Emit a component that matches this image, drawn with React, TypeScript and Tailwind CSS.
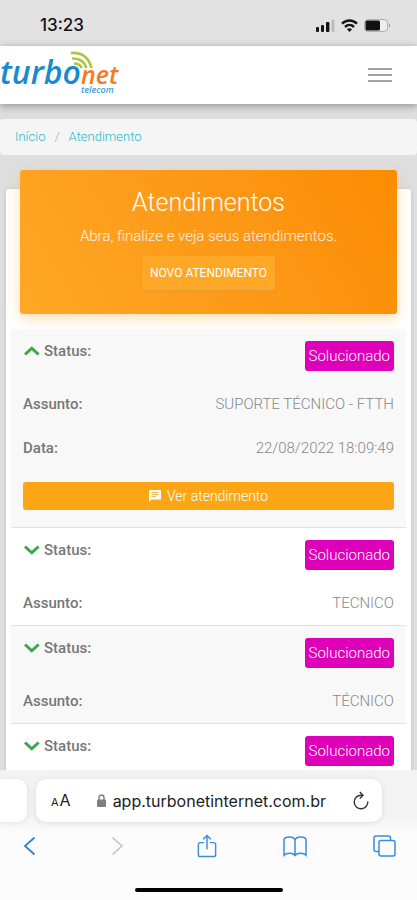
import { useState } from "react";

type Ticket = {
  id: number;
  status: string;
  subject: string;
  date: string;
};

const initialTickets: Ticket[] = [
  { id: 1, status: "Solucionado", subject: "SUPORTE TÉCNICO - FTTH", date: "22/08/2022 18:09:49" },
  { id: 2, status: "Solucionado", subject: "TECNICO", date: "10/06/2022 09:12:30" },
  { id: 3, status: "Solucionado", subject: "TÉCNICO", date: "02/05/2022 14:40:11" },
  { id: 4, status: "Solucionado", subject: "TÉCNICO", date: "18/03/2022 11:25:03" },
];

function StatusBar() {
  return (
    <div className="flex h-[46px] shrink-0 items-center justify-between bg-[#e2e2e2] pl-10 pr-[26px] font-['Inter',sans-serif]">
      <span className="pt-1 text-[17px] leading-5 font-medium text-[#111]">13:23</span>
      <div className="flex items-center gap-[6px] pt-1">
        <svg width="19" height="13" viewBox="0 0 19 13">
          <rect x="0" y="8" width="3" height="5" rx="1" fill="#151515" />
          <rect x="5" y="6" width="3" height="7" rx="1" fill="#151515" />
          <rect x="10" y="3" width="3.4" height="10" rx="1" fill="#151515" />
          <rect x="15.5" y="0.5" width="3" height="12.5" rx="1" fill="#bdbdbd" />
        </svg>
        <svg width="17" height="13" viewBox="0 0 17 13" fill="none" stroke="#151515" strokeWidth="2.5">
          <path d="M1 4.6C5.2 0.3 11.8 0.3 16 4.6" />
          <path d="M4 8C6.6 5.400 10.4 5.400 13 8" />
          <path d="M8.500 13L5.900 10.300C7.400 9 9.600 9 11.100 10.300Z" fill="#151515" stroke="none" />
        </svg>
        <svg width="27" height="13" viewBox="0 0 27 13">
          <rect x="0.600" y="0.600" width="23" height="11.800" rx="3.200" fill="#ededed" stroke="#aaa" />
          <rect x="1.500" y="1.500" width="14.500" height="10" rx="1.500" fill="#111" />
          <path d="M25 4.300C26.600 5 26.600 8 25 8.700Z" fill="#999" />
        </svg>
      </div>
    </div>
  );
}

function Logo() {
  return (
    <svg width="124" height="50" viewBox="0 0 124 50" role="img" aria-label="turbonet telecom">
      <g fontFamily="'Open Sans', sans-serif" fontStyle="italic">
        <text x="0" y="34" fontSize="32" fontWeight="600" fill="#1a8ad0">turbo</text>
        <text x="81" y="34" fontSize="25" fontWeight="600" fill="#f47b20">net</text>
        <text x="81" y="43" fontSize="9" fontWeight="600" fill="#3d9bd0">telecom</text>
      </g>
      <g fill="none" stroke="#a9c83a" strokeWidth="2.600">
        <path d="M71 3C82 2 89 8 91.500 18" />
        <path d="M72 8.500C80 8 84.500 12 86.500 18" />
        <path d="M74 13.500C78.500 13.500 80.500 15 81.500 18" />
      </g>
    </svg>
  );
}

function Header() {
  return (
    <header className="relative z-10 flex h-[58px] shrink-0 items-center justify-between bg-white pr-[25px] shadow-[0_2px_8px_rgba(0,0,0,0.35)]">
      <a href="#inicio">
        <Logo />
      </a>
      <button type="button" aria-label="Menu" className="flex w-6 flex-col gap-1">
        <span className="h-[2px] bg-[#a3a3a3]" />
        <span className="h-[2px] bg-[#a3a3a3]" />
        <span className="h-[2px] bg-[#a3a3a3]" />
      </button>
    </header>
  );
}

function Breadcrumb() {
  return (
    <nav className="mt-[15px] flex h-9 shrink-0 items-center gap-[9px] rounded bg-[#f5f5f5] px-[15px] text-[13px] leading-5 font-light">
      <a href="#inicio" className="text-[#26b8c4]">Início</a>
      <span className="text-[#aaa]">/</span>
      <a href="#atendimento" className="text-[#26b8c4]">Atendimento</a>
    </nav>
  );
}

function Banner() {
  return (
    <div className="mx-[14px] -mt-[19px] flex flex-col items-center rounded-[3px] bg-linear-60 from-[#ffa726] to-[#fb8c00] pt-[17px] pb-6 text-white shadow-[0_5px_14px_rgba(255,152,0,0.3)]">
      <h1 className="text-[25px] leading-8 font-light">Atendimentos</h1>
      <p className="mt-[7px] text-[15px] leading-5 font-light text-white/85">Abra, finalize e veja seus atendimentos.</p>
      <button type="button" className="mt-[10px] h-[34px] rounded-[3px] bg-[#ffa726] px-2 text-[12px] leading-5 shadow-[0_1px_2px_rgba(153,153,153,0.3)]">
        NOVO ATENDIMENTO
      </button>
    </div>
  );
}

function TicketRow({ ticket, open, onToggle }: { ticket: Ticket; open: boolean; onToggle: () => void }) {
  return (
    <li className="border-b border-[#e2e2e2] px-3 py-3 odd:bg-[#f8f8f8] even:bg-white">
      <div className="flex h-[30px] items-start justify-between">
        <button type="button" onClick={onToggle} aria-expanded={open} className="flex items-center gap-1 text-[15px] leading-5 font-medium text-[#777]">
          <svg width="17" height="10" viewBox="0 0 17 10" fill="none" stroke="#3fa648" strokeWidth="3">
            {open ? <path d="M2 8.500L8.800 2.200L15.600 8.500" /> : <path d="M2 1.500L8.800 7.800L15.600 1.500" />}
          </svg>
          Status:
        </button>
        <span className="flex h-[30px] items-center rounded-[3px] bg-[#dd00b8] px-1 text-[15px] leading-5 font-light text-white">
          {ticket.status}
        </span>
      </div>
      <dl className="mt-[23px] flex flex-col gap-6 text-[15px] leading-5">
        <div className="flex justify-between">
          <dt className="font-medium text-[#777]">Assunto:</dt>
          <dd className="font-light text-[#888]">{ticket.subject}</dd>
        </div>
        {open && (
          <div className="flex justify-between">
            <dt className="font-medium text-[#777]">Data:</dt>
            <dd className="font-light text-[#888]">{ticket.date}</dd>
          </div>
        )}
      </dl>
      {open && (
        <button type="button" className="mt-6 mb-[5px] flex h-7 w-full items-center justify-center gap-[6px] rounded-[3px] bg-[#fca615] text-[14px] leading-5 font-light text-white">
          <svg width="12" height="12" viewBox="0 0 12 12">
            <path d="M1.200 0H10.800Q12 0 12 1.200V8.400Q12 9.600 10.800 9.600H2.400L0 12V1.200Q0 0 1.200 0Z" fill="#fff" />
            <path d="M2.500 2.700H9.500M2.500 4.700H9.500M2.500 6.700H7" stroke="#fca615" strokeWidth="0.900" />
          </svg>
          Ver atendimento
        </button>
      )}
    </li>
  );
}

function BrowserBar() {
  return (
    <footer className="relative z-10 shrink-0 overflow-hidden bg-[#fcfcfc]">
      <div className="flex gap-[9px] bg-linear-to-b from-[#f3f3f3] from-70% to-[#fcfcfc] pt-[9px] pr-[35px] pb-3">
        <div className="h-[43px] w-[27px] rounded-r-[10px] bg-white shadow-[0_1px_6px_rgba(0,0,0,0.08)]" />
        <div className="flex h-[43px] flex-1 items-center justify-between rounded-[10px] bg-white pr-3 pl-[15px] shadow-[0_1px_6px_rgba(0,0,0,0.1)]">
          <button type="button" aria-label="Tamanho do texto" className="flex items-baseline gap-[1px] font-['Inter',sans-serif] leading-5 text-[#222]">
            <span className="text-[11px]">A</span>
            <span className="text-[16px]">A</span>
          </button>
          <div className="flex items-center gap-[7px] font-['Inter',sans-serif]">
            <svg width="9" height="13" viewBox="0 0 9 13">
              <rect x="0" y="5.500" width="9" height="7.500" rx="1.200" fill="#7e7e7e" />
              <path d="M2 6V3.500C2 0.200 7 0.200 7 3.500V6" fill="none" stroke="#7e7e7e" strokeWidth="1.400" />
            </svg>
            <span className="text-[16px] leading-5 text-[#222]">app.turbonetinternet.com.br</span>
          </div>
          <button type="button" aria-label="Recarregar">
            <svg width="18" height="20" viewBox="0 0 18 20" fill="none" stroke="#333" strokeWidth="1.400">
              <path d="M15.800 10.500A6.800 6.800 0 1 1 9 4.200H10.500" />
              <path d="M7.800 1L11 4.200L7.800 7.400" />
            </svg>
          </button>
        </div>
      </div>
      <div className="flex h-[46px] items-center justify-between pr-[21px] pb-[22px] pl-[17px]">
        <button type="button" aria-label="Voltar" className="flex w-6 justify-center">
          <svg width="13" height="20" viewBox="0 0 13 20" fill="none" stroke="#2c82dc" strokeWidth="1.800">
            <path d="M11.500 1.500L2 10L11.500 18.500" />
          </svg>
        </button>
        <button type="button" aria-label="Avançar" className="flex w-6 justify-center">
          <svg width="13" height="20" viewBox="0 0 13 20" fill="none" stroke="#c2c2c2" strokeWidth="1.600">
            <path d="M1.500 1.500L11 10L1.500 18.500" />
          </svg>
        </button>
        <button type="button" aria-label="Compartilhar" className="flex w-6 justify-center">
          <svg width="20" height="24" viewBox="0 0 20 25" fill="none" stroke="#3b8be0" strokeWidth="1.500">
            <path d="M7 9H3Q1 9 1 11V21.500Q1 23.500 3 23.500H17Q19 23.500 19 21.500V11Q19 9 17 9H13" />
            <path d="M10 16V1.500M6 5.500L10 1.500L14 5.500" />
          </svg>
        </button>
        <button type="button" aria-label="Favoritos" className="flex w-6 justify-center">
          <svg width="24" height="21" viewBox="0 0 24 21" fill="none" stroke="#3b8be0" strokeWidth="1.500">
            <path d="M12 4C11 0 2.500 0 1 3.200V19.200C3.500 16.500 10 16.500 12 19.500C14 16.500 20.500 16.500 23 19.200V3.200C21.500 0 13 0 12 4ZM12 4V19.500" />
          </svg>
        </button>
        <button type="button" aria-label="Abas" className="flex w-6 justify-center">
          <svg width="23" height="22" viewBox="0 0 23 22" fill="none" stroke="#3b8be0" strokeWidth="1.500">
            <rect x="6" y="5.500" width="16" height="15.500" rx="2" />
            <path d="M6 16.500H3Q1 16.500 1 14.500V3Q1 1 3 1H15.500Q17.500 1 17.500 3V5.500" />
          </svg>
        </button>
      </div>
      <div className="flex justify-center pt-2 pb-2">
        <span className="h-1 w-[148px] rounded-full bg-black" />
      </div>
    </footer>
  );
}

export default function App() {
  const [openId, setOpenId] = useState<number | null>(1);

  return (
    <div className="flex h-screen flex-col overflow-hidden bg-[#dedede] font-['Roboto',sans-serif]">
      <StatusBar />
      <Header />
      <main className="flex min-h-0 flex-1 flex-col overflow-hidden">
        <Breadcrumb />
        <section className="mx-[6px] mt-[34px] flex shrink-0 flex-col rounded-[3px] bg-white pb-6 shadow-[0_1px_4px_rgba(0,0,0,0.14)]">
          <Banner />
          <ul className="mx-[5px] mt-[15px]">
            {initialTickets.map((ticket) => (
              <TicketRow
                key={ticket.id}
                ticket={ticket}
                open={ticket.id === openId}
                onToggle={() => setOpenId(ticket.id === openId ? null : ticket.id)}
              />
            ))}
          </ul>
        </section>
      </main>
      <BrowserBar />
    </div>
  );
}
